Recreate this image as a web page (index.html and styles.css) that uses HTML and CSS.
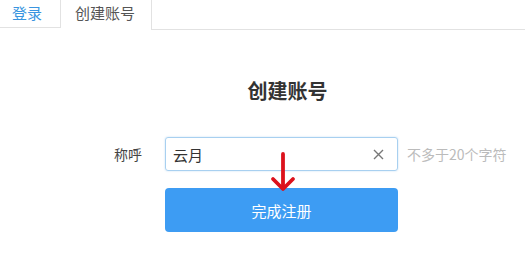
FILE: index.html
```html
<!DOCTYPE html>
<html>
<head>
<meta charset="utf-8">
<link rel="stylesheet" href="styles.css">
</head>
<body>
<div class="tabs">
  <div class="tab">登录</div>
  <div class="tab active">创建账号</div>
  <div class="tab-rest"></div>
</div>
<div class="form">
  <h1 class="title">创建账号</h1>
  <div class="row">
    <label class="label">称呼</label>
    <div class="input">
      <span class="value">云月</span>
      <svg class="clear" width="11" height="11" viewBox="0 0 11 11">
        <path d="M1 1 L10 10 M10 1 L1 10" stroke="#777" stroke-width="1.4" fill="none"/>
      </svg>
    </div>
    <span class="hint">不多于20个字符</span>
  </div>
  <div class="row">
    <span class="label"></span>
    <button class="submit">完成注册</button>
  </div>
  <svg class="arrow" width="30" height="42" viewBox="0 0 30 42">
    <path d="M15 2 L15 36" stroke="#dc121c" stroke-width="3.8" stroke-linecap="round" fill="none"/>
    <path d="M5 27 L15 37 L25 27" stroke="#dc121c" stroke-width="3.8" stroke-linecap="round" stroke-linejoin="round" fill="none"/>
  </svg>
</div>
</body>
</html>
```
FILE: styles.css
```css
* { box-sizing: border-box; }
html, body { margin: 0; padding: 0; background: #fff; }
body {
  width: 525px;
  height: 254px;
  overflow: hidden;
  font-family: "Noto Sans CJK SC", "Liberation Sans", sans-serif;
  color: #333;
}
.tabs {
  display: flex;
  height: 30px;
}
.tab {
  font-size: 15px;
  line-height: 30px;
  color: #555;
  border-bottom: 1px solid #e2e2e2;
  padding: 0 0 0 12px;
  width: 61px;
  height: 30px;
}
.tab:first-child {
  color: #3a95e0;
  border-right: 1px solid #e2e2e2;
  margin-top: -2px;
}
.tab.active {
  border-bottom: none;
  border-right: 1px solid #e2e2e2;
  width: 91px;
  padding-left: 14px;
  line-height: 26px;
}
.tab-rest {
  flex: 1;
  border-bottom: 1px solid #e2e2e2;
}
.form {
  position: relative;
  padding-top: 47px;
}
.title {
  margin: 0 0 32px 0;
  font-size: 20px;
  font-weight: bold;
  color: #333;
  text-align: center;
  padding-left: 50px;
  line-height: 28px;
}
.row {
  display: flex;
  align-items: center;
  margin-bottom: 17px;
}
.label {
  width: 165px;
  padding-right: 23px;
  text-align: right;
  font-size: 14px;
  color: #444;
}
.input {
  width: 233px;
  height: 34px;
  border: 1px solid #a8d0f0;
  border-radius: 3px;
  display: flex;
  align-items: center;
  justify-content: space-between;
  padding: 0 13px 0 7px;
  box-shadow: 0 0 2px rgba(100,170,230,0.4);
}
.value {
  font-size: 15px;
  color: #333;
}
.hint {
  margin-left: 9px;
  font-size: 14px;
  color: #bbb;
}
.submit {
  width: 233px;
  height: 44px;
  border: none;
  border-radius: 4px;
  background: #3d9cf3;
  color: #fff;
  font-family: inherit;
  font-size: 15px;
  margin-top: 0;
}
.arrow {
  position: absolute;
  left: 268px;
  top: 122px;
}
```
